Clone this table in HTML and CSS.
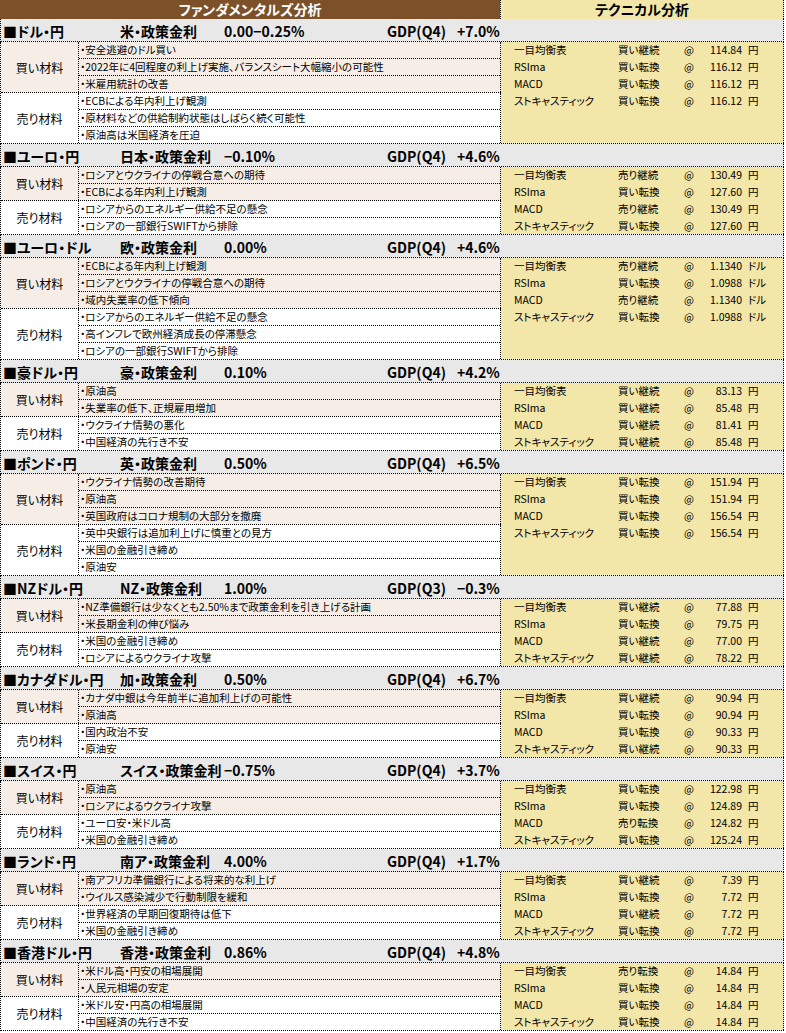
FILE: index.html
```html
<!DOCTYPE html>
<html lang="ja">
<head>
<meta charset="utf-8">
<title>ファンダメンタルズ分析</title>
<link rel="stylesheet" href="styles.css">
</head>
<body>
<div class="sheet">
  <div class="top">
    <div class="top-f">ファンダメンタルズ分析</div>
    <div class="top-t">テクニカル分析</div>
  </div>

  <section class="pair">
    <div class="pair-head"><span class="pname">■ドル・円</span><span class="policy"><span class="plabel">米・政策金利</span><span class="prate">0.00−0.25%</span></span><span class="gdp">GDP(Q4)</span><span class="gval">+7.0%</span></div>
    <div class="pair-body">
      <div class="fund">
        <div class="group buy"><div class="glabel">買い材料</div><ul class="items"><li>・安全逃避のドル買い</li><li>・2022年に4回程度の利上げ実施、バランスシート大幅縮小の可能性</li><li>・米雇用統計の改善</li></ul></div>
        <div class="group sell"><div class="glabel">売り材料</div><ul class="items"><li>・ECBによる年内利上げ観測</li><li>・原材料などの供給制約状態はしばらく続く可能性</li><li>・原油高は米国経済を圧迫</li></ul></div>
      </div>
      <div class="tech">
        <div class="trow"><span>一目均衡表</span><span>買い継続</span><span>@</span><span class="tval">114.84</span><span class="tunit">円</span></div>
        <div class="trow"><span>RSIma</span><span>買い転換</span><span>@</span><span class="tval">116.12</span><span class="tunit">円</span></div>
        <div class="trow"><span>MACD</span><span>買い転換</span><span>@</span><span class="tval">116.12</span><span class="tunit">円</span></div>
        <div class="trow"><span>ストキャスティック</span><span>買い転換</span><span>@</span><span class="tval">116.12</span><span class="tunit">円</span></div>
      </div>
    </div>
  </section>

  <section class="pair">
    <div class="pair-head"><span class="pname">■ユーロ・円</span><span class="policy"><span class="plabel">日本・政策金利</span><span class="prate">−0.10%</span></span><span class="gdp">GDP(Q4)</span><span class="gval">+4.6%</span></div>
    <div class="pair-body">
      <div class="fund">
        <div class="group buy"><div class="glabel">買い材料</div><ul class="items"><li>・ロシアとウクライナの停戦合意への期待</li><li>・ECBによる年内利上げ観測</li></ul></div>
        <div class="group sell"><div class="glabel">売り材料</div><ul class="items"><li>・ロシアからのエネルギー供給不足の懸念</li><li>・ロシアの一部銀行SWIFTから排除</li></ul></div>
      </div>
      <div class="tech">
        <div class="trow"><span>一目均衡表</span><span>売り継続</span><span>@</span><span class="tval">130.49</span><span class="tunit">円</span></div>
        <div class="trow"><span>RSIma</span><span>買い転換</span><span>@</span><span class="tval">127.60</span><span class="tunit">円</span></div>
        <div class="trow"><span>MACD</span><span>売り継続</span><span>@</span><span class="tval">130.49</span><span class="tunit">円</span></div>
        <div class="trow"><span>ストキャスティック</span><span>買い転換</span><span>@</span><span class="tval">127.60</span><span class="tunit">円</span></div>
      </div>
    </div>
  </section>

  <section class="pair">
    <div class="pair-head"><span class="pname">■ユーロ・ドル</span><span class="policy"><span class="plabel">欧・政策金利</span><span class="prate">0.00%</span></span><span class="gdp">GDP(Q4)</span><span class="gval">+4.6%</span></div>
    <div class="pair-body">
      <div class="fund">
        <div class="group buy"><div class="glabel">買い材料</div><ul class="items"><li>・ECBによる年内利上げ観測</li><li>・ロシアとウクライナの停戦合意への期待</li><li>・域内失業率の低下傾向</li></ul></div>
        <div class="group sell"><div class="glabel">売り材料</div><ul class="items"><li>・ロシアからのエネルギー供給不足の懸念</li><li>・高インフレで欧州経済成長の停滞懸念</li><li>・ロシアの一部銀行SWIFTから排除</li></ul></div>
      </div>
      <div class="tech">
        <div class="trow"><span>一目均衡表</span><span>売り継続</span><span>@</span><span class="tval">1.1340</span><span class="tunit">ドル</span></div>
        <div class="trow"><span>RSIma</span><span>買い転換</span><span>@</span><span class="tval">1.0988</span><span class="tunit">ドル</span></div>
        <div class="trow"><span>MACD</span><span>売り継続</span><span>@</span><span class="tval">1.1340</span><span class="tunit">ドル</span></div>
        <div class="trow"><span>ストキャスティック</span><span>買い転換</span><span>@</span><span class="tval">1.0988</span><span class="tunit">ドル</span></div>
      </div>
    </div>
  </section>

  <section class="pair">
    <div class="pair-head"><span class="pname">■豪ドル・円</span><span class="policy"><span class="plabel">豪・政策金利</span><span class="prate">0.10%</span></span><span class="gdp">GDP(Q4)</span><span class="gval">+4.2%</span></div>
    <div class="pair-body">
      <div class="fund">
        <div class="group buy"><div class="glabel">買い材料</div><ul class="items"><li>・原油高</li><li>・失業率の低下、正規雇用増加</li></ul></div>
        <div class="group sell"><div class="glabel">売り材料</div><ul class="items"><li>・ウクライナ情勢の悪化</li><li>・中国経済の先行き不安</li></ul></div>
      </div>
      <div class="tech">
        <div class="trow"><span>一目均衡表</span><span>買い継続</span><span>@</span><span class="tval">83.13</span><span class="tunit">円</span></div>
        <div class="trow"><span>RSIma</span><span>買い継続</span><span>@</span><span class="tval">85.48</span><span class="tunit">円</span></div>
        <div class="trow"><span>MACD</span><span>買い継続</span><span>@</span><span class="tval">81.41</span><span class="tunit">円</span></div>
        <div class="trow"><span>ストキャスティック</span><span>買い継続</span><span>@</span><span class="tval">85.48</span><span class="tunit">円</span></div>
      </div>
    </div>
  </section>

  <section class="pair">
    <div class="pair-head"><span class="pname">■ポンド・円</span><span class="policy"><span class="plabel">英・政策金利</span><span class="prate">0.50%</span></span><span class="gdp">GDP(Q4)</span><span class="gval">+6.5%</span></div>
    <div class="pair-body">
      <div class="fund">
        <div class="group buy"><div class="glabel">買い材料</div><ul class="items"><li>・ウクライナ情勢の改善期待</li><li>・原油高</li><li>・英国政府はコロナ規制の大部分を撤廃</li></ul></div>
        <div class="group sell"><div class="glabel">売り材料</div><ul class="items"><li>・英中央銀行は追加利上げに慎重との見方</li><li>・米国の金融引き締め</li><li>・原油安</li></ul></div>
      </div>
      <div class="tech">
        <div class="trow"><span>一目均衡表</span><span>買い転換</span><span>@</span><span class="tval">151.94</span><span class="tunit">円</span></div>
        <div class="trow"><span>RSIma</span><span>買い転換</span><span>@</span><span class="tval">151.94</span><span class="tunit">円</span></div>
        <div class="trow"><span>MACD</span><span>買い転換</span><span>@</span><span class="tval">156.54</span><span class="tunit">円</span></div>
        <div class="trow"><span>ストキャスティック</span><span>買い転換</span><span>@</span><span class="tval">156.54</span><span class="tunit">円</span></div>
      </div>
    </div>
  </section>

  <section class="pair">
    <div class="pair-head"><span class="pname">■NZドル・円</span><span class="policy"><span class="plabel">NZ・政策金利</span><span class="prate">1.00%</span></span><span class="gdp">GDP(Q3)</span><span class="gval">−0.3%</span></div>
    <div class="pair-body">
      <div class="fund">
        <div class="group buy"><div class="glabel">買い材料</div><ul class="items"><li>・NZ準備銀行は少なくとも2.50%まで政策金利を引き上げる計画</li><li>・米長期金利の伸び悩み</li></ul></div>
        <div class="group sell"><div class="glabel">売り材料</div><ul class="items"><li>・米国の金融引き締め</li><li>・ロシアによるウクライナ攻撃</li></ul></div>
      </div>
      <div class="tech">
        <div class="trow"><span>一目均衡表</span><span>買い継続</span><span>@</span><span class="tval">77.88</span><span class="tunit">円</span></div>
        <div class="trow"><span>RSIma</span><span>買い転換</span><span>@</span><span class="tval">79.75</span><span class="tunit">円</span></div>
        <div class="trow"><span>MACD</span><span>買い継続</span><span>@</span><span class="tval">77.00</span><span class="tunit">円</span></div>
        <div class="trow"><span>ストキャスティック</span><span>買い継続</span><span>@</span><span class="tval">78.22</span><span class="tunit">円</span></div>
      </div>
    </div>
  </section>

  <section class="pair">
    <div class="pair-head"><span class="pname">■カナダドル・円</span><span class="policy"><span class="plabel">加・政策金利</span><span class="prate">0.50%</span></span><span class="gdp">GDP(Q4)</span><span class="gval">+6.7%</span></div>
    <div class="pair-body">
      <div class="fund">
        <div class="group buy"><div class="glabel">買い材料</div><ul class="items"><li>・カナダ中銀は今年前半に追加利上げの可能性</li><li>・原油高</li></ul></div>
        <div class="group sell"><div class="glabel">売り材料</div><ul class="items"><li>・国内政治不安</li><li>・原油安</li></ul></div>
      </div>
      <div class="tech">
        <div class="trow"><span>一目均衡表</span><span>買い継続</span><span>@</span><span class="tval">90.94</span><span class="tunit">円</span></div>
        <div class="trow"><span>RSIma</span><span>買い転換</span><span>@</span><span class="tval">90.94</span><span class="tunit">円</span></div>
        <div class="trow"><span>MACD</span><span>買い転換</span><span>@</span><span class="tval">90.33</span><span class="tunit">円</span></div>
        <div class="trow"><span>ストキャスティック</span><span>買い継続</span><span>@</span><span class="tval">90.33</span><span class="tunit">円</span></div>
      </div>
    </div>
  </section>

  <section class="pair">
    <div class="pair-head"><span class="pname">■スイス・円</span><span class="policy"><span class="plabel">スイス・政策金利</span><span class="prate">−0.75%</span></span><span class="gdp">GDP(Q4)</span><span class="gval">+3.7%</span></div>
    <div class="pair-body">
      <div class="fund">
        <div class="group buy"><div class="glabel">買い材料</div><ul class="items"><li>・原油高</li><li>・ロシアによるウクライナ攻撃</li></ul></div>
        <div class="group sell"><div class="glabel">売り材料</div><ul class="items"><li>・ユーロ安・米ドル高</li><li>・米国の金融引き締め</li></ul></div>
      </div>
      <div class="tech">
        <div class="trow"><span>一目均衡表</span><span>買い転換</span><span>@</span><span class="tval">122.98</span><span class="tunit">円</span></div>
        <div class="trow"><span>RSIma</span><span>買い転換</span><span>@</span><span class="tval">124.89</span><span class="tunit">円</span></div>
        <div class="trow"><span>MACD</span><span>売り転換</span><span>@</span><span class="tval">124.82</span><span class="tunit">円</span></div>
        <div class="trow"><span>ストキャスティック</span><span>買い転換</span><span>@</span><span class="tval">125.24</span><span class="tunit">円</span></div>
      </div>
    </div>
  </section>

  <section class="pair">
    <div class="pair-head"><span class="pname">■ランド・円</span><span class="policy"><span class="plabel">南ア・政策金利</span><span class="prate">4.00%</span></span><span class="gdp">GDP(Q4)</span><span class="gval">+1.7%</span></div>
    <div class="pair-body">
      <div class="fund">
        <div class="group buy"><div class="glabel">買い材料</div><ul class="items"><li>・南アフリカ準備銀行による将来的な利上げ</li><li>・ウイルス感染減少で行動制限を緩和</li></ul></div>
        <div class="group sell"><div class="glabel">売り材料</div><ul class="items"><li>・世界経済の早期回復期待は低下</li><li>・米国の金融引き締め</li></ul></div>
      </div>
      <div class="tech">
        <div class="trow"><span>一目均衡表</span><span>買い継続</span><span>@</span><span class="tval">7.39</span><span class="tunit">円</span></div>
        <div class="trow"><span>RSIma</span><span>買い転換</span><span>@</span><span class="tval">7.72</span><span class="tunit">円</span></div>
        <div class="trow"><span>MACD</span><span>買い継続</span><span>@</span><span class="tval">7.72</span><span class="tunit">円</span></div>
        <div class="trow"><span>ストキャスティック</span><span>買い転換</span><span>@</span><span class="tval">7.72</span><span class="tunit">円</span></div>
      </div>
    </div>
  </section>

  <section class="pair">
    <div class="pair-head"><span class="pname">■香港ドル・円</span><span class="policy"><span class="plabel">香港・政策金利</span><span class="prate">0.86%</span></span><span class="gdp">GDP(Q4)</span><span class="gval">+4.8%</span></div>
    <div class="pair-body">
      <div class="fund">
        <div class="group buy"><div class="glabel">買い材料</div><ul class="items"><li>・米ドル高・円安の相場展開</li><li>・人民元相場の安定</li></ul></div>
        <div class="group sell"><div class="glabel">売り材料</div><ul class="items"><li>・米ドル安・円高の相場展開</li><li>・中国経済の先行き不安</li></ul></div>
      </div>
      <div class="tech">
        <div class="trow"><span>一目均衡表</span><span>売り転換</span><span>@</span><span class="tval">14.84</span><span class="tunit">円</span></div>
        <div class="trow"><span>RSIma</span><span>買い転換</span><span>@</span><span class="tval">14.84</span><span class="tunit">円</span></div>
        <div class="trow"><span>MACD</span><span>買い転換</span><span>@</span><span class="tval">14.84</span><span class="tunit">円</span></div>
        <div class="trow"><span>ストキャスティック</span><span>買い転換</span><span>@</span><span class="tval">14.84</span><span class="tunit">円</span></div>
      </div>
    </div>
  </section>
</div>
</body>
</html>
```

FILE: styles.css
```css
* { box-sizing: border-box; }
html, body { margin: 0; padding: 0; background: #ffffff; }
body {
  font-family: "Noto Sans CJK JP", "Noto Sans", sans-serif;
  color: #000;
  font-feature-settings: "palt";
}
.sheet { width: 784px; }

.top { display: flex; height: 19px; }
.top-f {
  width: 500px;
  background: #7c5129;
  color: #ffffff;
  font-weight: bold;
  font-size: 14px;
  line-height: 19px;
  text-align: center;
}
.top-t {
  flex: 1;
  background: #f2e6a8;
  font-weight: bold;
  font-size: 14px;
  line-height: 19px;
  text-align: center;
  border-left: 1px dotted #000;
  border-right: 1px dotted #000;
}

.pair-head {
  display: flex;
  align-items: center;
  height: 23px;
  padding-top: 2px;
  background: #e8e8e8;
  border-left: 1px dotted #000;
  border-right: 1px dotted #000;
  border-bottom: 1px dotted #000;
  font-weight: bold;
  font-size: 14px;
  line-height: 18px;
  white-space: nowrap;
}
.pname { width: 119px; padding-left: 2px; }
.policy { display: flex; width: 267px; }
.plabel { min-width: 102px; margin-right: 2px; }
.gdp { width: 70px; }

.pair-body {
  display: flex;
  border-left: 1px dotted #000;
  border-bottom: 1px dotted #000;
}
.fund { width: 500px; }
.group { display: flex; }
.group.buy {
  background: #f6eee6;
  border-bottom: 1px dotted #000;
}
.group.sell { background: #ffffff; }
.glabel {
  width: 78px;
  border-right: 1px dotted #000;
  font-size: 12px;
  display: flex;
  align-items: center;
  justify-content: center;
}
.items {
  list-style: none;
  margin: 0;
  padding: 0;
  width: 422px;
  border-right: 1px dotted #000;
}
.items li {
  height: 17px;
  line-height: 16px;
  font-size: 10.5px;
  padding-left: 1px;
  white-space: nowrap;
  border-bottom: 1px dotted #000;
}
.items li:last-child { border-bottom: 0; height: 16px; }

.tech {
  width: 283px;
  background: #f2e6a8;
  border-right: 1px dotted #000;
  padding-left: 13px;
  font-size: 10.5px;
}
.trow {
  display: grid;
  grid-template-columns: 104px 66px 14px 44px 30px;
  height: 17px;
  line-height: 15px;
  white-space: nowrap;
}
.trow:last-child { height: 16px; }
.trow .tval { text-align: right; }
.trow .tunit { padding-left: 6px; }
```
